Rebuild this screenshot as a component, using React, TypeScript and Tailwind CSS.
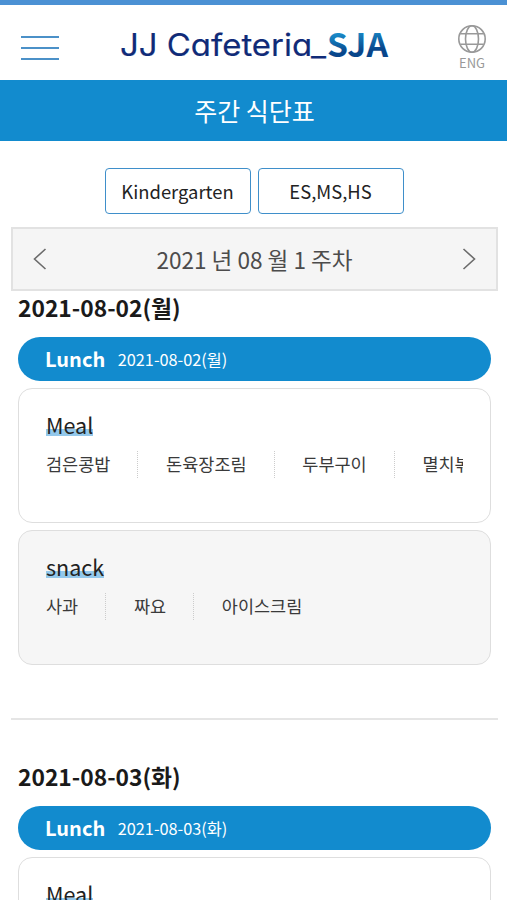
type Meal = { name: string; items: string[]; shaded?: boolean };
type Day = { date: string; meals: Meal[] };

const days: Day[] = [
  {
    date: "2021-08-02(월)",
    meals: [
      { name: "Meal", items: ["검은콩밥", "돈육장조림", "두부구이", "멸치볶음"] },
      { name: "snack", items: ["사과", "짜요", "아이스크림"], shaded: true },
    ],
  },
  { date: "2021-08-03(화)", meals: [{ name: "Meal", items: [] }] },
];

function Logo() {
  return (
    <svg width="280" height="50" viewBox="0 -5 280 50" className="mt-[5px] ml-[18px]" aria-label="JJ Cafeteria_SJA">
      <defs>
        <linearGradient id="sja" x1="0" y1="0" x2="0.15" y2="1">
          <stop offset="0.3" stopColor="#1b90cd" />
          <stop offset="0.75" stopColor="#08468b" />
        </linearGradient>
      </defs>
      <text x="3" y="31" textLength="206" lengthAdjust="spacingAndGlyphs" fill="#102b78" stroke="#102b78" strokeWidth="0.2" className="font-['Inter',sans-serif] text-[31px] font-normal [font-feature-settings:'cv11']">
        JJ Cafeteria_
      </text>
      <text x="210" y="32" textLength="61" lengthAdjust="spacingAndGlyphs" fill="url(#sja)" className="font-['Noto_Sans_CJK_KR',sans-serif] text-[32.5px] font-bold">
        SJA
      </text>
    </svg>
  );
}

function Globe() {
  return (
    <svg width="30" height="30" viewBox="0 0 30 30" fill="none" stroke="#999" strokeWidth="1.6">
      <circle cx="15" cy="15" r="13.2" />
      <ellipse cx="15" cy="15" rx="6.5" ry="13.2" />
      <path d="M3.3 9.8h23.4M3.3 20.2h23.4" />
    </svg>
  );
}

function Chevron({ right }: { right?: boolean }) {
  return (
    <svg width="14" height="22" viewBox="0 0 14 22" fill="none" stroke="#6b6b6b" strokeWidth="1.6">
      <path d={right ? "M1.5 1 12.5 11 1.5 21" : "M12.5 1 1.5 11 12.5 21"} />
    </svg>
  );
}

function MealCard({ meal }: { meal: Meal }) {
  return (
    <section className={`h-[135px] shrink-0 rounded-[14px] border border-[#dedede] px-[27px] pt-[20px] ${meal.shaded ? "bg-[#f6f6f6]" : "bg-white"}`}>
      <div className="flex h-[31px] items-center">
        <h3 className="bg-[linear-gradient(transparent_20px,#93c8eb_20px,#93c8eb_27px,transparent_27px)] text-[21.5px] leading-[31px] text-[#222]">{meal.name}</h3>
      </div>
      <ul className="mt-[11px] flex h-[27px] items-center overflow-hidden text-[17.5px] text-[#3a3a3a]">
        {meal.items.map((item, i) => (
          <li key={item} className={`flex h-[27px] shrink-0 items-center whitespace-nowrap pr-[27px] ${i ? "border-l border-dotted border-[#ccc] pl-[27.7px]" : ""}`}>
            {item}
          </li>
        ))}
      </ul>
    </section>
  );
}

function DaySection({ day }: { day: Day }) {
  return (
    <div className="pl-[18px] pr-4">
      <h2 className="flex h-[46px] items-center pb-[12px] text-[22.8px] font-bold text-[#1a1a1a]">{day.date}</h2>
      <div className="flex h-11 items-center rounded-full bg-[#128bce] pl-[27px] text-white">
        <span className="text-[20px] font-bold leading-none">Lunch</span>
        <span className="ml-[12.5px] text-[16.3px]">{day.date}</span>
      </div>
      <div className="mt-[7px] flex flex-col gap-[7px]">
        {day.meals.map((meal) => (
          <MealCard key={meal.name} meal={meal} />
        ))}
      </div>
    </div>
  );
}

export default function App() {
  return (
    <div className="h-[900px] w-[507px] overflow-hidden bg-white font-['Noto_Sans_CJK_KR',sans-serif]">
      <div className="h-[4.5px] bg-[#4b91d4]" />
      <header className="flex h-[75.5px] items-center pl-[21px] pr-5">
        <button className="mt-[11px] flex w-[38px] flex-col gap-[9px]" aria-label="menu">
          <span className="h-[2px] bg-[#4b91c8]" />
          <span className="h-[2px] bg-[#4b91c8]" />
          <span className="h-[2px] bg-[#4b91c8]" />
        </button>
        <div className="flex flex-1 justify-start pl-[40px]">
          <Logo />
        </div>
        <button className="mt-[11px] flex w-[30px] flex-col items-center text-[#999]">
          <Globe />
          <span className="text-[13px] leading-[18px]">ENG</span>
        </button>
      </header>
      <h1 className="flex h-[61px] items-center justify-center bg-[#128bce] pl-[2px] pt-px text-[25px] text-white">주간 식단표</h1>

      <nav className="mt-[27px] flex justify-center gap-[7px] pl-px text-[18.4px] text-[#222]">
        <button className="h-[46px] w-[146px] rounded-[4px] border border-[#3f8fca] pt-px">Kindergarten</button>
        <button className="h-[46px] w-[146px] rounded-[4px] border border-[#3f8fca] pt-px">ES,MS,HS</button>
      </nav>

      <div className="ml-[11px] mt-[13px] flex h-[64px] w-[487px] items-center justify-between border-2 border-[#e2e2e2] bg-[#f5f5f5] px-5 text-[#4c4c4c]">
        <Chevron />
        <span className="pt-[2px] text-[22.6px]">2021 년 08 월 1 주차</span>
        <Chevron right />
      </div>

      <DaySection day={days[0]} />
      <hr className="ml-[11px] mt-[53px] w-[487px] border-t-2 border-[#e5e5e5]" />
      <div className="mt-[40px]">
        <DaySection day={days[1]} />
      </div>
    </div>
  );
}
